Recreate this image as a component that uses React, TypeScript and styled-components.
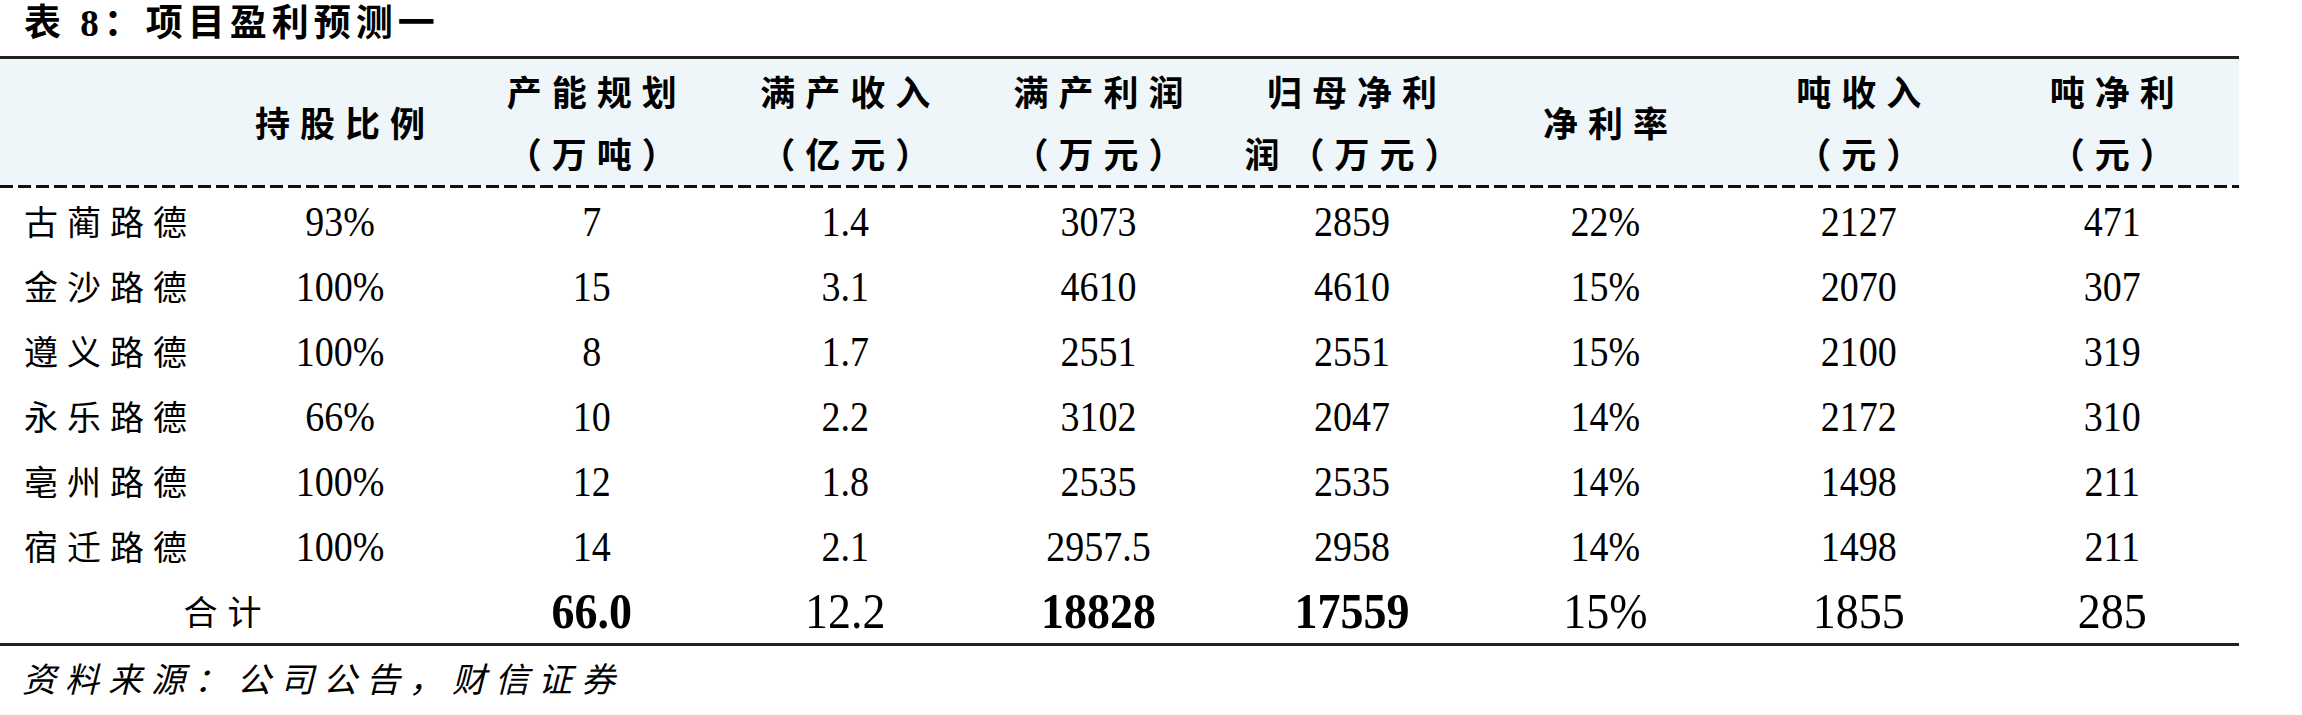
import React from 'react';
import styled, { createGlobalStyle } from 'styled-components';

const GlobalStyle = createGlobalStyle`
  html, body {
    margin: 0;
    padding: 0;
    background: #ffffff;
  }
  body {
    font-family: "Liberation Serif", "Noto Sans CJK SC", serif;
    color: #000;
  }
`;

const Page = styled.div`
  width: 2302px;
  height: 715px;
  overflow: hidden;
`;

const Title = styled.h1`
  margin: 0;
  height: 56px;
  padding-left: 24px;
  font-family: "Liberation Serif", "Noto Sans CJK SC", serif;
  font-size: 37px;
  font-weight: 700;
  line-height: 48px;
  letter-spacing: 5px;
`;

const Table = styled.div`
  width: 2239px;
  display: flex;
  flex-direction: column;
`;

const Rule = styled.div`
  height: 3px;
  background: #222;
`;

const DashRule = styled.div`
  height: 3px;
  background: repeating-linear-gradient(
    to right,
    #111 0,
    #111 13px,
    transparent 13px,
    transparent 18px
  );
`;

const Cols = `
  display: grid;
  grid-template-columns: 215px 250px repeat(7, 1fr);
`;

const HeaderRow = styled.div`
  ${Cols}
  height: 126px;
  background: #eef6f9;
`;

const HeadCell = styled.div`
  display: flex;
  flex-direction: column;
  align-items: center;
  justify-content: center;
  font-family: "Noto Sans CJK SC", sans-serif;
  font-size: 35px;
  font-weight: 700;
  line-height: 62px;
  letter-spacing: 10px;
  padding-left: 10px;
  white-space: nowrap;
`;

const Row = styled.div<{ total?: boolean }>`
  ${Cols}
  height: 65px;
  font-size: ${(p) => (p.total ? 46 : 38)}px;
`;

const Cell = styled.div<{ bold?: boolean }>`
  display: flex;
  align-items: center;
  justify-content: center;
  font-weight: ${(p) => (p.bold ? 700 : 400)};
  white-space: nowrap;
`;

// the source digits are a little taller than Times is wide
const Num = styled.span`
  display: inline-block;
  transform: scaleY(1.12);
`;

const NameCell = styled.div`
  display: flex;
  align-items: center;
  padding-left: 24px;
  font-family: "Noto Sans CJK SC", sans-serif;
  font-size: 34px;
  letter-spacing: 9px;
  white-space: nowrap;
`;

const TotalLabel = styled.div`
  grid-column: span 2;
  display: flex;
  align-items: center;
  justify-content: center;
  font-family: "Noto Sans CJK SC", sans-serif;
  font-size: 34px;
  letter-spacing: 10px;
  padding-right: 10px;
`;

const Source = styled.div`
  padding-left: 22px;
  height: 64px;
  line-height: 64px;
  font-family: "Noto Sans CJK SC", sans-serif;
  font-style: italic;
  font-size: 34px;
  letter-spacing: 9px;
`;

const headers: string[][] = [
  [],
  ['持股比例'],
  ['产能规划', '（万吨）'],
  ['满产收入', '（亿元）'],
  ['满产利润', '（万元）'],
  ['归母净利', '润（万元）'],
  ['净利率'],
  ['吨收入', '（元）'],
  ['吨净利', '（元）'],
];

const rows: string[][] = [
  ['古蔺路德', '93%', '7', '1.4', '3073', '2859', '22%', '2127', '471'],
  ['金沙路德', '100%', '15', '3.1', '4610', '4610', '15%', '2070', '307'],
  ['遵义路德', '100%', '8', '1.7', '2551', '2551', '15%', '2100', '319'],
  ['永乐路德', '66%', '10', '2.2', '3102', '2047', '14%', '2172', '310'],
  ['亳州路德', '100%', '12', '1.8', '2535', '2535', '14%', '1498', '211'],
  ['宿迁路德', '100%', '14', '2.1', '2957.5', '2958', '14%', '1498', '211'],
];

const totals: { v: string; bold?: boolean }[] = [
  { v: '66.0', bold: true },
  { v: '12.2' },
  { v: '18828', bold: true },
  { v: '17559', bold: true },
  { v: '15%' },
  { v: '1855' },
  { v: '285' },
];

export default function App() {
  return (
    <Page>
      <GlobalStyle />
      <Title>表 8：项目盈利预测一</Title>
      <Table>
        <Rule />
        <HeaderRow>
          {headers.map((lines, i) => (
            <HeadCell key={i}>
              {lines.map((l) => (
                <span key={l}>{l}</span>
              ))}
            </HeadCell>
          ))}
        </HeaderRow>
        <DashRule />
        {rows.map((r) => (
          <Row key={r[0]}>
            <NameCell>{r[0]}</NameCell>
            {r.slice(1).map((v, i) => (
              <Cell key={i}>
                <Num>{v}</Num>
              </Cell>
            ))}
          </Row>
        ))}
        <Row total>
          <TotalLabel>合计</TotalLabel>
          {totals.map((t, i) => (
            <Cell key={i} bold={t.bold}>
              <Num>{t.v}</Num>
            </Cell>
          ))}
        </Row>
        <Rule />
      </Table>
      <Source>资料来源：公司公告，财信证券</Source>
    </Page>
  );
}
